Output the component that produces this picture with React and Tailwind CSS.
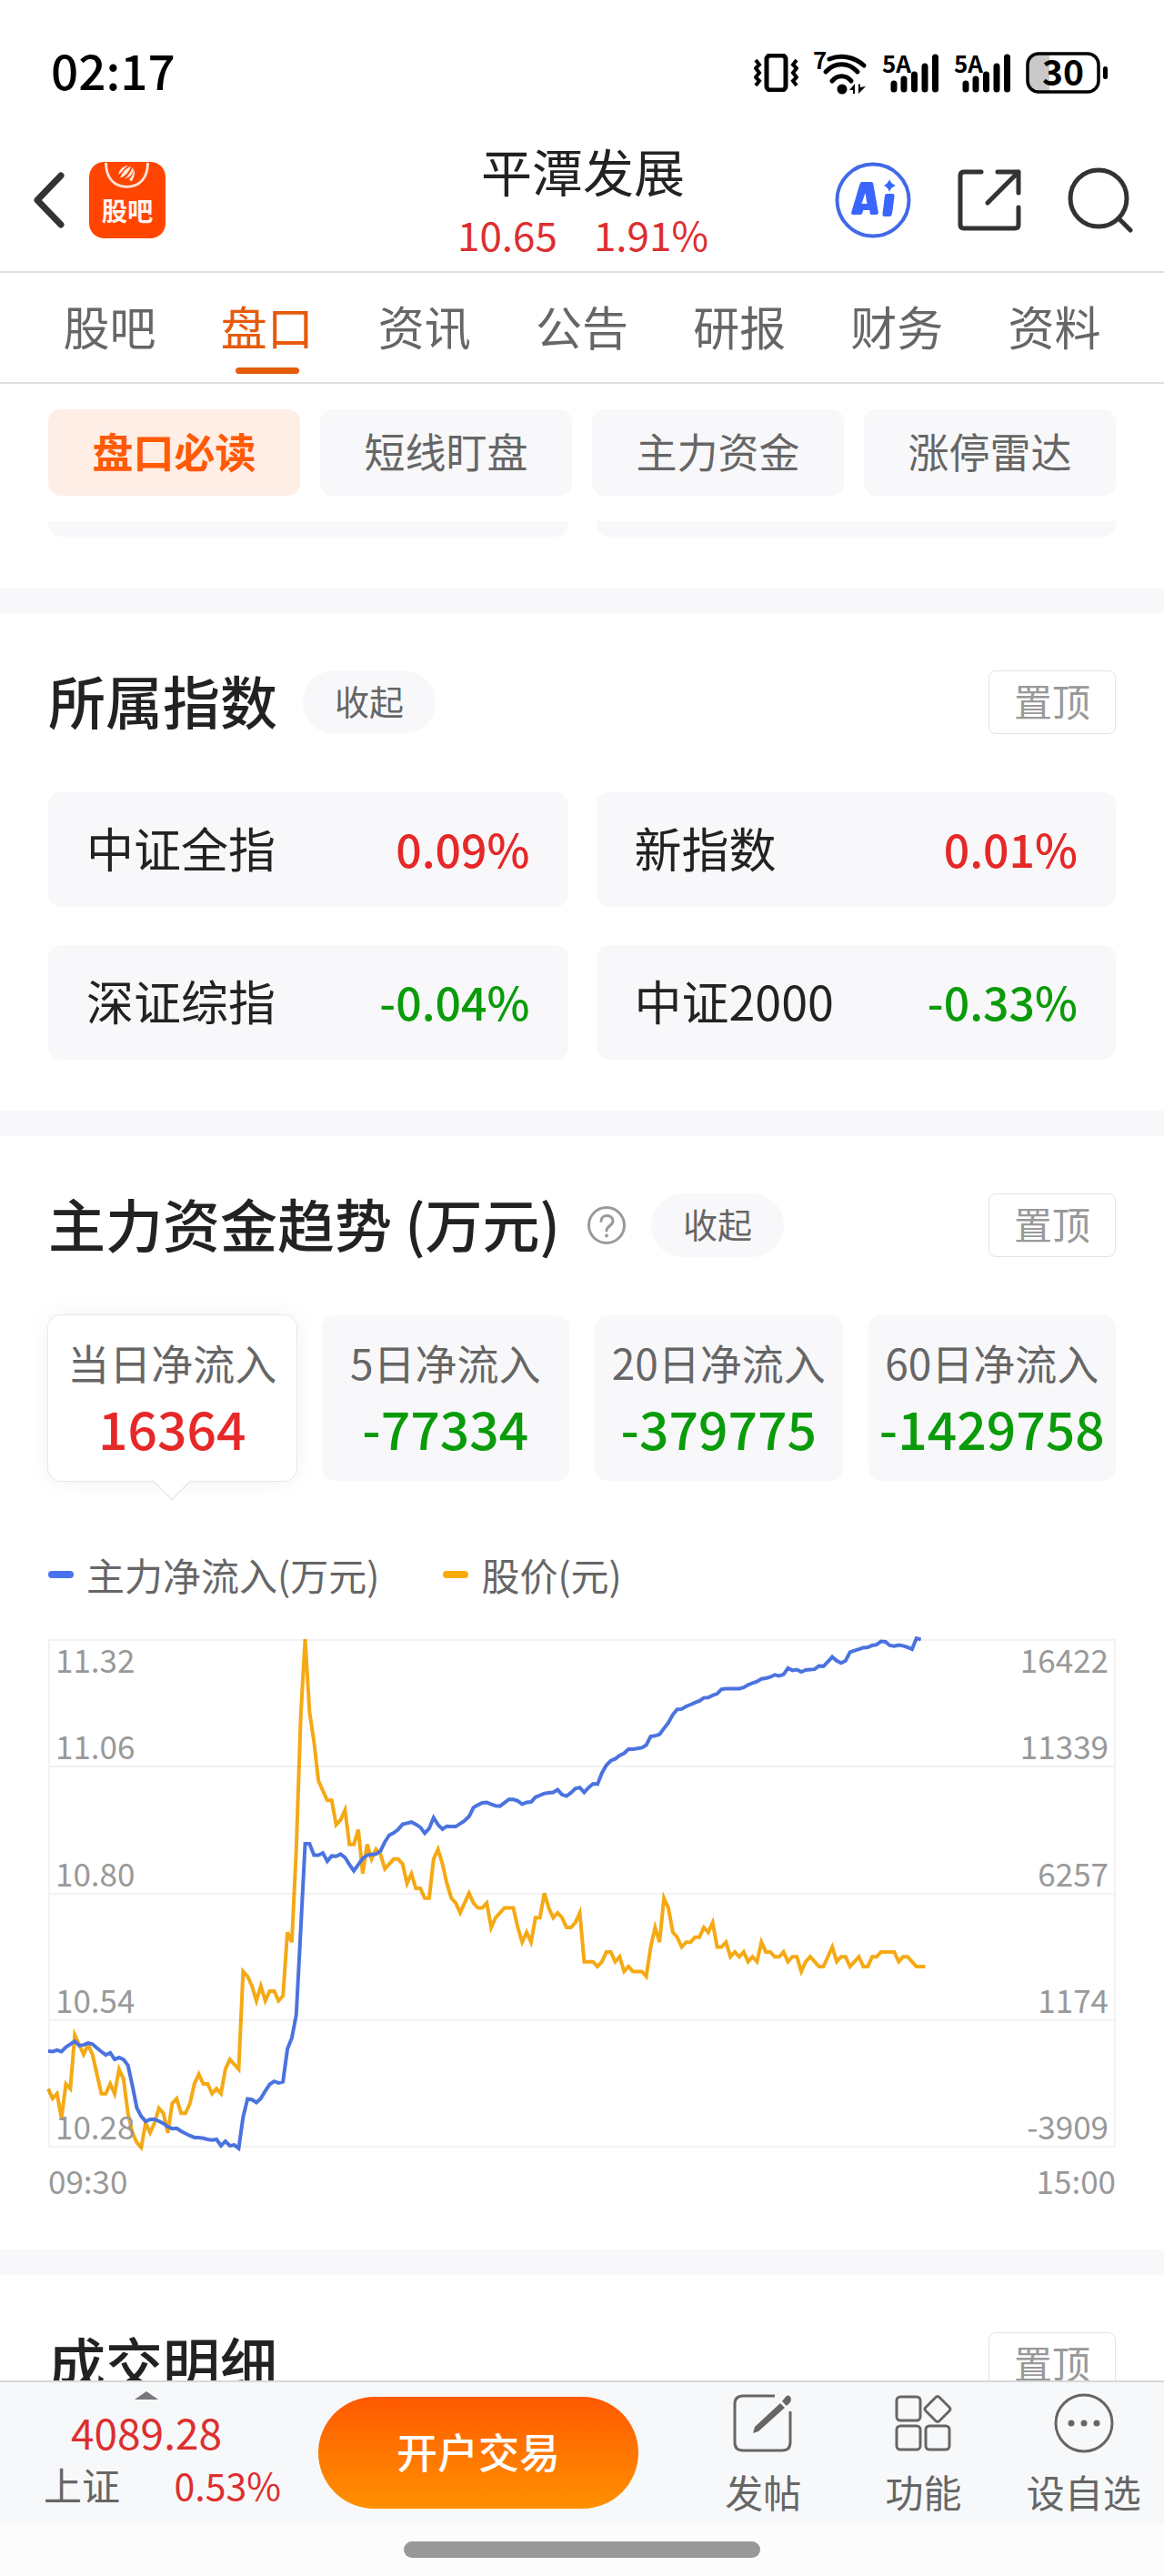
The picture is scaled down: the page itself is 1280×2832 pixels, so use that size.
import React, { useState } from 'react';

const TABS = ['股吧', '盘口', '资讯', '公告', '研报', '财务', '资料'];
const FILTERS = ['盘口必读', '短线盯盘', '主力资金', '涨停雷达'];

const INDEXES = [
  { name: '中证全指', change: '0.09%' },
  { name: '新指数', change: '0.01%' },
  { name: '深证综指', change: '-0.04%' },
  { name: '中证2000', change: '-0.33%' },
];

const FLOWS = [
  { label: '当日净流入', value: '16364' },
  { label: '5日净流入', value: '-77334' },
  { label: '20日净流入', value: '-379775' },
  { label: '60日净流入', value: '-1429758' },
];

const AXIS = [
  ['11.32', '16422'],
  ['11.06', '11339'],
  ['10.80', '6257'],
  ['10.54', '1174'],
  ['10.28', '-3909'],
];

const MINUTES = 241;
const PLOT_HEIGHT = 1367;

// One value per minute, in cents above 10.28
const PRICE = [
  12, 10, 11, 6, 13, 12, 23, 21, 19, 21, 19, 15, 11, 11, 13, 11, 16, 14, 7, 3,
  1, 0, 5, 3, 5, 8, 7, 3, 9, 10, 7, 7, 9, 13, 15, 13, 13, 11, 12, 11,
  16, 18, 17, 16, 36, 35, 33, 30, 33, 30, 32, 32, 30, 31, 44, 42, 61, 88, 104, 89,
  83, 75, 73, 71, 71, 66, 67, 69, 62, 62, 65, 56, 62, 59, 61, 60, 57, 58, 59, 59,
  58, 54, 56, 53, 53, 51, 51, 59, 61, 58, 54, 51, 50, 48, 50, 52, 50, 49, 49, 50,
  45, 47, 48, 49, 49, 49, 45, 42, 44, 42, 47, 47, 52, 49, 47, 48, 47, 45, 45, 46,
  48, 38, 38, 38, 37, 38, 40, 40, 38, 39, 36, 37, 36, 36, 36, 35, 41, 45, 42, 51,
  49, 44, 43, 41, 42, 42, 43, 43, 45, 44, 46, 41, 41, 42, 39, 40, 39, 40, 38, 39,
  38, 42, 40, 40, 39, 39, 40, 38, 39, 39, 36, 38, 39, 38, 37, 37, 39, 41, 38, 39,
  39, 37, 38, 39, 37, 37, 39, 39, 40, 40, 40, 40, 38, 39, 39, 38, 37, 37, 37,
];

// One value per minute, distance from the top of the plot
const INFLOW = [
  1107, 1109, 1105, 1109, 1097, 1089, 1081, 1093, 1091, 1086, 1089, 1099, 1109, 1118, 1112, 1130, 1125, 1130, 1146, 1200,
  1260, 1283, 1297, 1291, 1291, 1296, 1302, 1311, 1316, 1315, 1323, 1329, 1335, 1340, 1340, 1342, 1345, 1347, 1345, 1362,
  1350, 1362, 1360, 1369, 1285, 1236, 1238, 1246, 1235, 1215, 1197, 1189, 1193, 1190, 1102, 1072, 1010, 782, 550, 550,
  581, 581, 575, 597, 583, 584, 578, 587, 606, 623, 606, 590, 581, 579, 578, 570, 545, 527, 521, 512,
  498, 495, 492, 498, 506, 522, 509, 480, 499, 511, 503, 504, 504, 496, 488, 477, 453, 446, 440, 439,
  444, 448, 449, 440, 431, 431, 435, 444, 439, 438, 425, 420, 415, 413, 412, 405, 418, 422, 413, 402,
  399, 412, 399, 389, 390, 360, 339, 327, 322, 313, 307, 296, 296, 294, 292, 285, 262, 260, 256, 240,
  225, 203, 189, 188, 181, 176, 171, 166, 158, 157, 151, 147, 135, 133, 133, 133, 133, 130, 123, 118,
  114, 107, 105, 102, 96, 99, 95, 78, 84, 82, 88, 83, 82, 81, 72, 73, 61, 48, 58, 64,
  58, 35, 31, 27, 23, 22, 17, 15, 6, 7, 17, 19, 16, 18, 22, 27, -2, 1,
];

const toPoints = (values, toY) => values.map((v, i) => `${i},${toY(v)}`).join(' ');

const changeColor = (value) => (value.startsWith('-') ? 'text-[#0a9b0a]' : 'text-[#e52828]');

const VibrateIcon = () => (
  <svg width="49" height="42" viewBox="0 0 49 42" fill="none" stroke="#000" strokeWidth="4" aria-hidden="true">
    <rect x="14" y="2" width="21" height="38" rx="4" strokeWidth="5" />
    <path d="M2 7l4 5-4 4 4 5-4 5 4 4-4 5" />
    <path d="M47 7l-4 5 4 4-4 5 4 5-4 4 4 5" />
  </svg>
);

const WifiIcon = () => (
  <svg className="overflow-visible" width="60" height="48" viewBox="0 0 60 48" fill="none" stroke="#000" strokeWidth="5" aria-hidden="true">
    <text x="0" y="20" fontSize="26" fontWeight="700" fill="#000" stroke="none">7</text>
    <path d="M18 9a36 36 0 0 1 38 7" strokeLinecap="round" />
    <path d="M14 23c10-11 25-11 35 0" strokeLinecap="round" />
    <path d="M21 33c6-7 15-7 21 0" strokeLinecap="round" />
    <circle cx="32" cy="42" r="5.500" fill="#000" stroke="none" />
    <path d="M46 36v11h-2v-4h-4zM50 47V36l2 1v3l6-1z" fill="#000" stroke="none" />
  </svg>
);

const SignalIcon = () => (
  <svg className="overflow-visible" width="63" height="46" viewBox="0 0 63 46" aria-hidden="true">
    <text x="0" y="23" fontSize="26" fontWeight="700">5A</text>
    <g stroke="#000" strokeWidth="7" strokeLinecap="round">
      <path d="M13 35v6M24 30v11M35.500 25v16M47 16v25M58.500 6v35" />
    </g>
  </svg>
);

const BatteryIcon = () => (
  <svg className="overflow-visible" width="92" height="46" viewBox="0 0 92 46" aria-hidden="true">
    <path d="M14 2H26V44H14A12 12 0 0 1 2 32V14A12 12 0 0 1 14 2z" fill="#c9c9c9" />
    <rect x="2" y="2" width="78" height="42" rx="12" fill="none" stroke="#000" strokeWidth="3.500" />
    <rect x="85" y="16" width="5" height="14" rx="2.500" />
    <text x="41" y="37" fontSize="39" fontWeight="700" textAnchor="middle">30</text>
  </svg>
);

const BackIcon = () => (
  <svg width="36" height="64" viewBox="0 0 36 64" fill="none" stroke="#333" strokeWidth="7" strokeLinecap="round" strokeLinejoin="round">
    <path d="M31 5L5 32l26 27" />
  </svg>
);

const GubaLogo = () => (
  <svg width="84" height="84" viewBox="0 0 86 86">
    <rect width="86" height="86" rx="17" fill="#ff4500" />
    <path d="M19 1c0 17 9 27 23.500 27S66 18 66 1" fill="none" stroke="#ffe4d8" strokeWidth="3" />
    <path d="M33 14c1-6 6-10 11-10-5 3-6 7-11 10zM35 18c2-6 6-11 12-13-2 6-6 11-12 13zM40 19c4-3 7-8 9-13 2 5-2 12-9 13zM45 20c4-4 5-8 5-12 3 5 0 10-2 14z" fill="#ffe9df" />
    <text x="43" y="67" fontSize="29" fontWeight="700" fill="#fff4ee" textAnchor="middle">股吧</text>
  </svg>
);

const AiIcon = () => (
  <svg width="84" height="84" viewBox="0 0 84 84">
    <circle cx="42" cy="42" r="39.500" fill="none" stroke="#4169e8" strokeWidth="4" />
    <path d="M29 22h11q2 0 2.300 2l5.500 31q.4 3-2.500 3h-5q-2 0-2-5h-7q-1 5-3 5h-8q-3 0-2-3l9-30q1-3 2-3zM33.500 34l-4 12h6z" fill="#3a66ff" fillRule="evenodd" stroke="none" />
    <path d="M57 35h6q3 0 2.500 3L63 57q-.5 3-3 3h-5q-3 0-2.500-3L55 37q.3-2 2-2z" fill="#3a66ff" />
    <path d="M60 19q1.500 5 7 7-5.500 2-7 7-1.500-5-6-7 4.500-2 6-7z" fill="#3a66ff" />
  </svg>
);

const ShareIcon = () => (
  <svg width="70" height="70" viewBox="0 0 70 70" fill="none" stroke="#333" strokeWidth="5" strokeLinecap="round" strokeLinejoin="round">
    <path d="M26 4H7q-4 0-4 4v54q0 4 4 4h56q4 0 4-4V43" />
    <path d="M44 4h23v23M67 4L33 38" />
  </svg>
);

const SearchIcon = () => (
  <svg width="72" height="72" viewBox="0 0 72 72" fill="none" stroke="#333" strokeWidth="5" strokeLinecap="round">
    <circle cx="34" cy="34" r="31" />
    <path d="M56 56l13 13" />
  </svg>
);

const HelpIcon = () => (
  <svg width="42" height="42" viewBox="0 0 42 42" fill="none" stroke="#999" strokeWidth="3" strokeLinecap="round">
    <circle cx="21" cy="21" r="19.500" />
    <path d="M15 16.500c0-8 13-8 13 0 0 5-7 5-7 10.500" />
    <circle cx="21" cy="32.500" r="2" fill="#999" stroke="none" />
  </svg>
);

const PostIcon = () => (
  <svg width="66" height="66" viewBox="0 0 66 66" fill="none" stroke="#666" strokeWidth="3">
    <path d="M46 3H11q-9 0-9 9v42q0 9 9 9h43q9 0 9-9V20" />
    <path d="M52 11l5 5-29 26-6 2 2-7z" fill="#666" stroke="none" />
    <path d="M54 9l3.500-4.500q3-4 6 0 1 4-1 6L59 14z" fill="#666" stroke="none" />
  </svg>
);

const FunctionIcon = () => (
  <svg width="66" height="66" viewBox="0 0 66 66" fill="none" stroke="#666" strokeWidth="3">
    <rect x="4" y="4" width="26" height="26" rx="4" />
    <rect x="4" y="36" width="26" height="26" rx="4" />
    <rect x="36" y="36" width="26" height="26" rx="4" />
    <path d="M47 4.500q2-2 4 0l11 11q2 2 0 4l-11 11q-2 2-4 0l-11-11q-2-2 0-4z" />
  </svg>
);

const MoreIcon = () => (
  <svg width="66" height="66" viewBox="0 0 66 66" fill="none" stroke="#666" strokeWidth="3">
    <circle cx="33" cy="33" r="31" />
    <g fill="#666" stroke="none">
      <circle cx="19" cy="33" r="3.500" />
      <circle cx="33" cy="33" r="3.500" />
      <circle cx="47" cy="33" r="3.500" />
    </g>
  </svg>
);

const ACTIONS = [
  { label: '发帖', Icon: PostIcon },
  { label: '功能', Icon: FunctionIcon },
  { label: '设自选', Icon: MoreIcon },
];

const SectionHeader = ({ title, help, collapsible }) => (
  <div className="flex h-[70px] items-center">
    <h2 className="pb-[6px] text-[63px] leading-[64px] font-medium whitespace-nowrap text-[#222]">{title}</h2>
    {help && (
      <button type="button" aria-label="说明" className="ml-[30px]">
        <HelpIcon />
      </button>
    )}
    {collapsible && (
      <button type="button" className="ml-7 h-[70px] rounded-full bg-[#f8f8fa] px-[35px] pb-1 text-[38px] leading-[66px] text-[#666]">
        收起
      </button>
    )}
    <button type="button" className="ml-auto h-[70px] rounded-lg border border-[#e4e4e4] px-[27px] pb-1 text-[42px] leading-[64px] text-[#999]">
      置顶
    </button>
  </div>
);

const Divider = () => <div className="h-7 bg-[#f8f8fa]" />;

const FlowChart = () => (
  <div>
    <div className="relative h-[559px]">
      <svg
        className="absolute inset-0 h-full w-full overflow-visible"
        viewBox={`0 0 ${MINUTES} ${PLOT_HEIGHT}`}
        preserveAspectRatio="none"
        fill="none"
        strokeWidth="4"
        role="img"
        aria-label="主力资金趋势"
      >
        <polyline points={toPoints(PRICE, (v) => (104 - v) * 13.14)} stroke="#f5a914" vectorEffect="non-scaling-stroke" />
        <polyline points={toPoints(INFLOW, (v) => v)} stroke="#4b73e0" vectorEffect="non-scaling-stroke" />
      </svg>
      <div className="relative grid h-full grid-rows-4 border-x-2 border-t-2 border-black/5 text-[35px] leading-[36px] text-[#999]">
        {AXIS.slice(1).map(([price, inflow], i) => (
          <div key={price} className="flex flex-col justify-between border-b-2 border-black/5 px-[6px] pb-1">
            <div className="flex justify-between pt-[2px]">
              {i === 0 && (
                <>
                  <span>{AXIS[0][0]}</span>
                  <span>{AXIS[0][1]}</span>
                </>
              )}
            </div>
            <div className="flex justify-between">
              <span>{price}</span>
              <span>{inflow}</span>
            </div>
          </div>
        ))}
      </div>
    </div>
    <div className="mt-[18px] mb-[2px] flex justify-between text-[35px] leading-[36px] text-[#999]">
      <span>09:30</span>
      <span>15:00</span>
    </div>
  </div>
);

export default function App() {
  const [tab, setTab] = useState('盘口');
  const [filter, setFilter] = useState('盘口必读');
  const [flow, setFlow] = useState(0);

  return (
    <div className="flex h-screen flex-col bg-white font-['Noto_Sans_CJK_SC',sans-serif] text-[#222]">
      {/* Status bar */}
      <div className="flex h-[150px] shrink-0 items-center justify-between pt-[10px] pr-[60px] pl-14 text-black">
        <span className="pb-2 text-[53px] leading-[60px] font-medium">02:17</span>
        <div className="flex items-center gap-4">
          <VibrateIcon />
          <WifiIcon />
          <SignalIcon />
          <SignalIcon />
          <BatteryIcon />
        </div>
      </div>

      {/* Title bar */}
      <header className="grid h-[150px] shrink-0 grid-cols-[1fr_auto_1fr] items-center border-b-2 border-[#dedede] pr-[34px] pb-2 pl-9">
        <div className="flex items-center gap-[26px]">
          <button type="button" aria-label="返回">
            <BackIcon />
          </button>
          <a href="#guba" aria-label="股吧">
            <GubaLogo />
          </a>
        </div>
        <div className="text-center">
          <h1 className="text-[56px] leading-[74px]">平潭发展</h1>
          <p className="flex justify-center gap-[40px] text-[44px] leading-[66px] text-[#dc2f2f]">
            <span>10.65</span>
            <span>1.91%</span>
          </p>
        </div>
        <div className="flex items-center justify-end gap-[51px]">
          <button type="button" aria-label="AI">
            <AiIcon />
          </button>
          <button type="button" aria-label="分享">
            <ShareIcon />
          </button>
          <button type="button" aria-label="搜索">
            <SearchIcon />
          </button>
        </div>
      </header>

      <nav className="flex h-[122px] shrink-0 border-b-2 border-[#dedede] px-[34px]">
        {TABS.map((name) => (
          <button
            key={name}
            type="button"
            onClick={() => setTab(name)}
            className={`flex flex-1 flex-col items-center pt-[26px] text-[51px] leading-[64px] ${
              tab === name ? 'text-[#e65a0c]' : 'text-[#666]'
            }`}
          >
            {name}
            {tab === name && <span className="mt-[14px] h-[7px] w-[70px] rounded-full bg-[#e65a0c]" />}
          </button>
        ))}
      </nav>

      <main className="min-h-0 flex-1 overflow-hidden">
        <div className="grid grid-cols-4 gap-[22px] px-[53px] py-7">
          {FILTERS.map((name) => (
            <button
              key={name}
              type="button"
              onClick={() => setFilter(name)}
              className={`h-[95px] rounded-[14px] pb-1 text-[45px] ${
                filter === name ? 'bg-[#ffeee6] font-bold text-[#ff5a05]' : 'bg-[#f8f8fa] text-[#666]'
              }`}
            >
              {name}
            </button>
          ))}
        </div>

        {/* Bottom edge of the cards scrolled under the filters */}
        <div className="grid grid-cols-2 gap-[31px] px-[53px] pb-14">
          <div className="h-[17px] rounded-b-[14px] bg-[#f8f8fa]" />
          <div className="h-[17px] rounded-b-[14px] bg-[#f8f8fa]" />
        </div>

        <Divider />

        <section className="px-[53px] pt-[63px] pb-14">
          <SectionHeader title="所属指数" collapsible />
          <div className="mt-16 grid grid-cols-2 gap-x-[31px] gap-y-[42px]">
            {INDEXES.map(({ name, change }) => (
              <a
                key={name}
                href="#index"
                className="flex h-[126px] items-center justify-between rounded-[14px] bg-[#f8f8fa] px-[42px] pb-1"
              >
                <span className="text-[52px]">{name}</span>
                <span className={`text-[50px] font-medium ${changeColor(change)}`}>{change}</span>
              </a>
            ))}
          </div>
        </section>

        <Divider />

        <section className="px-[53px] pt-[63px] pb-14">
          <SectionHeader title="主力资金趋势 (万元)" help collapsible />
          <div className="mt-16 grid grid-cols-4 gap-7">
            {FLOWS.map(({ label, value }, i) => (
              <button
                key={label}
                type="button"
                onClick={() => setFlow(i)}
                className={`relative flex h-[182px] flex-col items-center rounded-[14px] pt-[18px] whitespace-nowrap ${
                  flow === i ? 'bg-white shadow-[0_0_28px_rgba(0,0,0,0.06)] ring-1 ring-[#e8e8e8]' : 'bg-[#f8f8fa]'
                }`}
              >
                <span className="text-[46px] leading-[66px] text-[#666]">{label}</span>
                <span className={`text-[57px] leading-[78px] font-medium ${changeColor(value)}`}>{value}</span>
                {flow === i && (
                  <span className="absolute -bottom-[15px] h-[30px] w-[30px] rotate-45 border-r border-b border-[#e0e0e0] bg-white" />
                )}
              </button>
            ))}
          </div>

          <div className="mt-[82px] mb-[50px] flex gap-[70px] text-[42px] leading-[42px] text-[#666]">
            <span className="flex items-center gap-[14px]">
              <i className="h-2 w-7 rounded-full bg-[#4a72ee]" />
              主力净流入(万元)
            </span>
            <span className="flex items-center gap-[14px]">
              <i className="h-2 w-7 rounded-full bg-[#faaa0a]" />
              股价(元)
            </span>
          </div>

          <FlowChart />
        </section>

        <Divider />

        <section className="px-[53px] pt-[63px]">
          <SectionHeader title="成交明细" />
        </section>
      </main>

      <footer className="flex h-[159px] shrink-0 border-t-2 border-[#d6d8da] bg-[#f7f8fa]">
        <button type="button" className="flex w-[322px] flex-col items-center pt-[10px] text-[#dc2f2f]">
          <svg width="26" height="9" viewBox="0 0 26 9" fill="#77777b" aria-hidden="true">
            <path d="M13 0l13 9H0z" />
          </svg>
          <span className="mt-[11px] text-[46px] leading-[48px]">4089.28</span>
          <span className="mt-[10px] flex w-full items-center justify-between pr-[13px] pl-12 leading-[48px]">
            <span className="text-[42px] text-[#666]">上证</span>
            <span className="text-[41px]">0.53%</span>
          </span>
        </button>
        <button
          type="button"
          className="mt-4 ml-7 h-[123px] w-[352px] rounded-full bg-linear-to-b from-[#ff5800] to-[#ff8f00] pb-1 text-[45px] font-medium text-white"
        >
          开户交易
        </button>
        <div className="ml-[49px] flex flex-1">
          {ACTIONS.map(({ label, Icon }) => (
            <button key={label} type="button" className="flex flex-1 flex-col items-center gap-[18px] pt-3 text-[42px] leading-[48px] text-[#666]">
              <Icon />
              {label}
            </button>
          ))}
        </div>
      </footer>

      {/* Home indicator */}
      <div className="flex h-14 shrink-0 justify-center bg-[#fcfcfc] pt-[18px]">
        <div className="h-[18px] w-[392px] rounded-full bg-[#999]" />
      </div>
    </div>
  );
}
